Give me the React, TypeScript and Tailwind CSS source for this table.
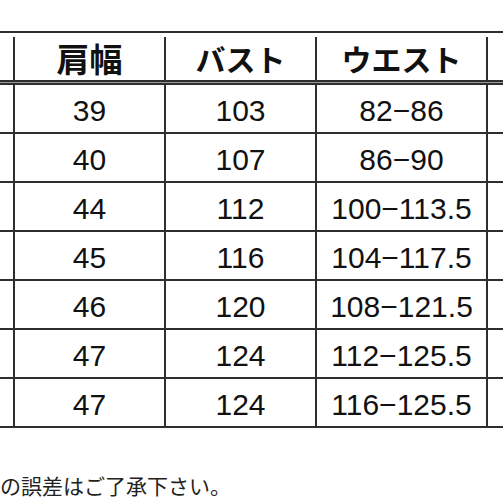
const rows: [string, string, string][] = [
  ['39', '103', '82−86'],
  ['40', '107', '86−90'],
  ['44', '112', '100−113.5'],
  ['45', '116', '104−117.5'],
  ['46', '120', '108−121.5'],
  ['47', '124', '112−125.5'],
  ['47', '124', '116−125.5'],
];

const line = 'border-[#2e2e2e]';

export default function App() {
  return (
    <div className="w-[503px] h-[503px] overflow-hidden bg-white text-[#111]">
      <div className={`mt-[31px] border-t-2 ${line}`}>
        {/* header */}
        <div
          className="flex h-[47px] items-center font-bold pt-[4px]"
          style={{ fontFamily: '"Noto Sans CJK JP", sans-serif' }}
        >
          <div className={`w-[15px] h-full shrink-0 border-r-2 ${line}`} />
          <div className={`w-[151px] h-full shrink-0 border-r-2 ${line} flex items-center justify-center text-[33px]`}>肩幅</div>
          <div className={`w-[151px] h-full shrink-0 border-r-2 ${line} flex items-center justify-center text-[30px]`}>バスト</div>
          <div className={`w-[171px] h-full shrink-0 border-r-2 ${line} flex items-center justify-center text-[30px]`}>ウエスト</div>
          <div className="flex-1" />
        </div>
        <div className={`h-[5px] border-y-2 ${line} bg-[#9a9a9a]`} />

        {/* body */}
        {rows.map(([a, b, c], i) => (
          <div
            key={i}
            className={`flex h-[49px] border-b-2 ${line} text-[30px] leading-none`}
            style={{ fontFamily: '"Liberation Sans", "Noto Sans CJK JP", sans-serif' }}
          >
            <div className={`w-[15px] shrink-0 border-r-2 ${line}`} />
            <div className={`w-[151px] shrink-0 border-r-2 ${line} flex items-center justify-center pt-[5px]`}>{a}</div>
            <div className={`w-[151px] shrink-0 border-r-2 ${line} flex items-center justify-center pt-[5px]`}>{b}</div>
            <div className={`w-[171px] shrink-0 border-r-2 ${line} flex items-center justify-center pt-[5px]`}>{c}</div>
            <div className="flex-1" />
          </div>
        ))}
      </div>

      <p
        className="mt-[47px] text-[21px] leading-[21px] text-[#222] whitespace-nowrap"
        style={{ fontFamily: '"Noto Sans CJK JP", sans-serif' }}
      >
        の誤差はご了承下さい。
      </p>
    </div>
  );
}
